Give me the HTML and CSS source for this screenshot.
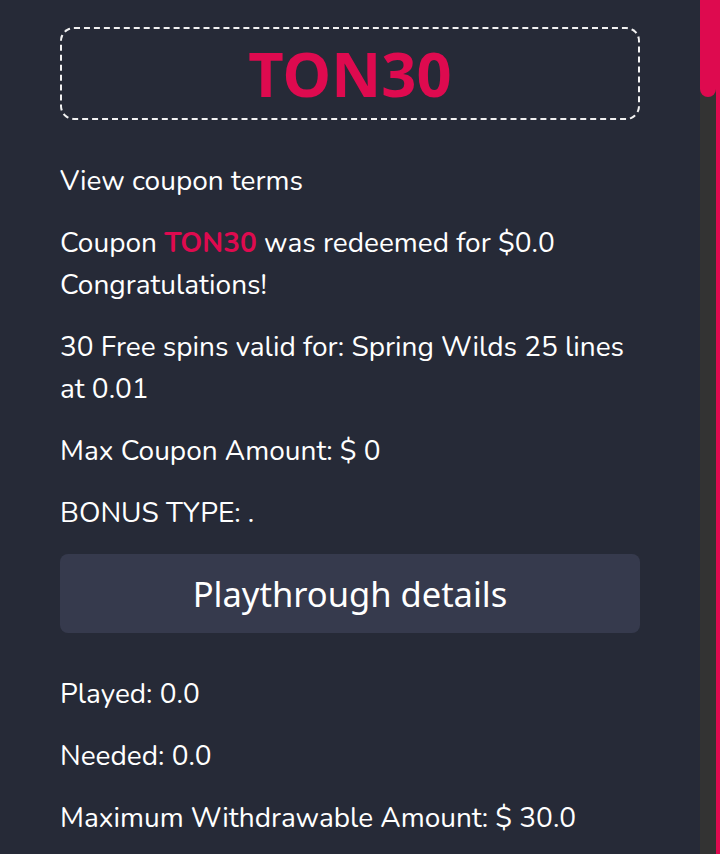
FILE: index.html
```html
<!DOCTYPE html>
<html lang="en">
<head>
<meta charset="utf-8">
<title>Coupon</title>
<link rel="stylesheet" href="styles.css">
</head>
<body>
<div class="page">
  <main class="content">
    <div class="code-box"><span class="code">TON30</span></div>
    <p>View coupon terms</p>
    <p>Coupon <strong class="hl">TON30</strong> was redeemed for $0.0<br>Congratulations!</p>
    <p>30 Free spins valid for: Spring Wilds 25 lines at 0.01</p>
    <p>Max Coupon Amount: $ 0</p>
    <p>BONUS TYPE: .</p>
    <button class="details" type="button">Playthrough details</button>
    <p>Played: 0.0</p>
    <p>Needed: 0.0</p>
    <p>Maximum Withdrawable Amount: $ 30.0</p>
  </main>
  <div class="scrollbar"><div class="thumb"></div></div>
</div>
</body>
</html>
```

FILE: styles.css
```css
html, body {
  margin: 0;
  padding: 0;
  height: 100%;
  overflow: hidden;
  background: #262a37;
}
.page {
  display: flex;
  height: 854px;
}
.content {
  flex: 1;
  padding: 27px 60px 0 60px;
  color: #ffffff;
  font-family: Nunito, "Noto Sans", "Open Sans", sans-serif;
  font-size: 28px;
  line-height: 42px;
}
.code-box {
  box-sizing: border-box;
  height: 93px;
  border: 2px dashed #f2f2f2;
  border-radius: 14px;
  display: flex;
  align-items: center;
  justify-content: center;
  margin-bottom: 40px;
}
.code {
  font-family: "Noto Sans", sans-serif;
  font-weight: 700;
  font-size: 61.5px;
  line-height: 1;
  color: #de0a4f;
}
.content p {
  margin: 0 0 20px 0;
}
.hl {
  color: #de0a4f;
  font-weight: 700;
}
.details {
  display: block;
  width: 100%;
  height: 79px;
  border: 0;
  border-radius: 8px;
  background: #363a4d;
  color: #ffffff;
  font-family: "Noto Sans", sans-serif;
  font-size: 34.5px;
  font-weight: 400;
  margin: 0 0 40px 0;
  padding: 0;
  cursor: pointer;
}
.scrollbar {
  width: 16px;
  height: 100%;
  background: #333333;
  border-right: 4px solid #de0a4f;
}
.thumb {
  height: 97px;
  background: #de0a4f;
  border-radius: 0 0 8px 8px;
}
```
